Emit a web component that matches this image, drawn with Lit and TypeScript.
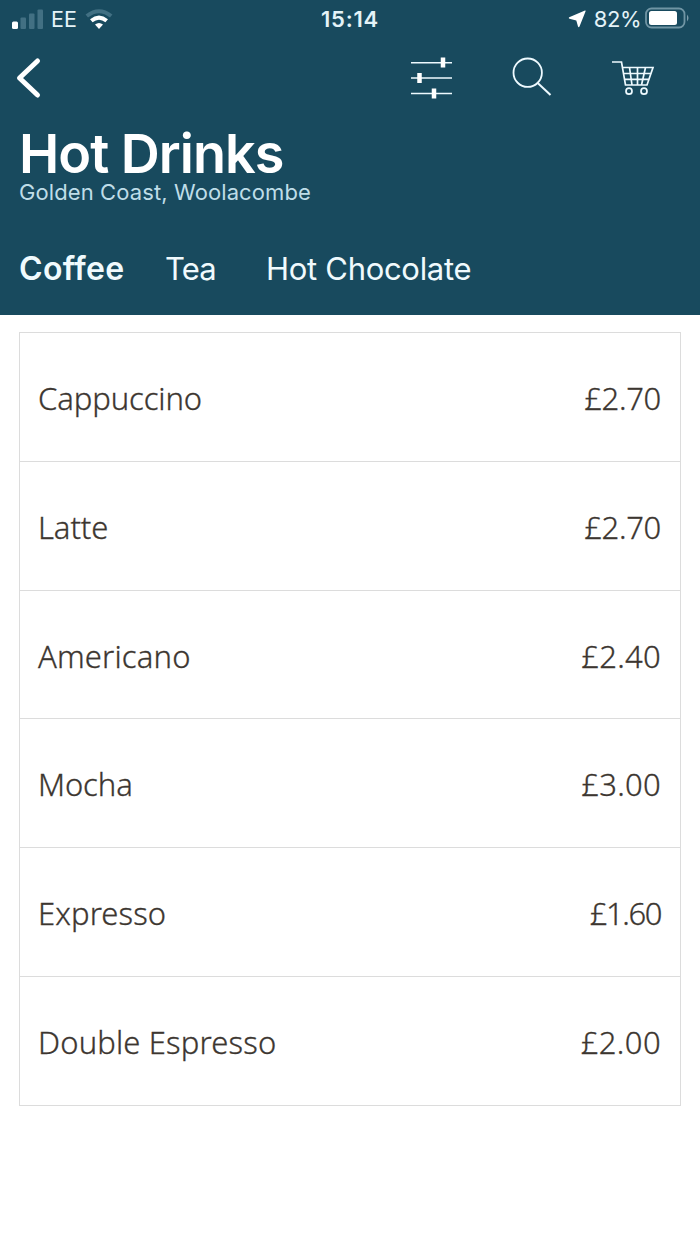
import { LitElement, html, css } from "lit";
import { customElement } from "lit/decorators.js";

interface Drink { name: string; price: string; fit: string; priceFit: string }

const DRINKS: Drink[] = [
  { name: "Cappuccino", price: "£2.70", fit: "-0.1px", priceFit: "-0.3px" },
  { name: "Latte", price: "£2.70", fit: "-0.1px", priceFit: "-0.3px" },
  { name: "Americano", price: "£2.40", fit: "0.15px", priceFit: "0.3px" },
  { name: "Mocha", price: "£3.00", fit: "-0.1px", priceFit: "0.3px" },
  { name: "Expresso", price: "£1.60", fit: "0.1px", priceFit: "-1.4px" },
  { name: "Double Espresso", price: "£2.00", fit: "0.15px", priceFit: "0.4px" },
];

@customElement("app-root")
export class AppRoot extends LitElement {
  static styles = css`
    :host { display: block; min-height: 1244px; background: #fff; font-family: Inter, sans-serif; }
    svg { display: block; }
    header { box-sizing: border-box; height: 315px; background: #184a5e; color: #fff; display: flex; flex-direction: column; }
    .status { height: 38px; display: grid; grid-template-columns: 1fr auto 1fr; align-items: center; color: #e4f3f8; font-size: 22px; line-height: 38px; }
    .left { display: flex; align-items: center; padding-left: 11px; }
    .carrier { margin: 0 8px 0 7px; font-size: 21.5px; }
    .time { font-weight: 600; font-size: 22px; letter-spacing: 0.8px; }
    .right { display: flex; align-items: center; justify-content: flex-end; padding-right: 10px; }
    .pct { margin: 0 4px 0 8px; letter-spacing: -0.5px; }
    .nav { height: 82px; display: flex; }
    h1 { margin: 7px 0 0 19px; font-size: 54px; line-height: 54px; font-weight: 600; letter-spacing: -1px; }
    .place { margin: 0 0 0 19px; font-size: 22px; line-height: 22px; color: #bfdde8; letter-spacing: 0.1px; }
    .tabs { display: flex; margin: 47px 0 0 19px; font-size: 31px; line-height: 38px; color: #f0fafd; }
    .tab { white-space: nowrap; letter-spacing: -0.3px; }
    .tab.coffee { font-weight: 600; width: 146px; font-size: 32px; letter-spacing: 0.3px; }
    .tab.tea { width: 101px; letter-spacing: -0.8px; }
    .list { box-sizing: border-box; margin: 17px 19px 0; height: 774px; border: 1px solid #dcdcdc; display: flex; flex-direction: column; font-family: "Noto Sans", sans-serif; font-weight: 300; font-size: 31px; color: #3c3630; -webkit-text-stroke: 0.3px #3c3630; }
    .row { flex: 1 1 0; display: flex; justify-content: space-between; align-items: center; padding: 2px 19px 0 18px; border-bottom: 1px solid #dcdcdc; }
    .row:last-child { border-bottom: 0; }
  `;

  render() {
    return html`
      <header>
        <div class="status">
          <div class="left">
            <svg width="33" height="24" viewBox="0 0 33 24" fill="#427083">
              <rect x="1" y="14.5" width="6" height="7.5" rx="1.5" fill="#fff"></rect>
              <rect x="9.5" y="10.5" width="5.5" height="11.5" rx="1"></rect>
              <rect x="18" y="6.5" width="5.5" height="15.5" rx="1"></rect>
              <rect x="26.5" y="2.5" width="5.5" height="19.5" rx="1"></rect>
            </svg>
            <span class="carrier">EE</span>
            <svg width="28" height="24" viewBox="0 0 28 24" fill="none">
              <path d="M1.8 9Q14-.5 26.2 9" stroke="#427083" stroke-width="4"></path>
              <path d="M6.3 13.8Q14 7.5 21.7 13.8" stroke="#fff" stroke-width="4"></path>
              <path d="M10 17.5Q14 14.5 18 17.5L14 22Z" fill="#fff"></path>
            </svg>
          </div>
          <span class="time">15:14</span>
          <div class="right">
            <svg width="18" height="18" viewBox="0 0 18 18" fill="#fff"><path d="M17 .5Q18 .3 17.5 1.5L11.5 16.5Q10.7 18 10 16.5L8.3 10.4L1.5 8.8Q0 8 1.2 7.3Z"></path></svg>
            <span class="pct">82%</span>
            <svg width="45" height="24" viewBox="0 0 45 24" fill="none">
              <rect x="1" y="1.5" width="38.5" height="19" rx="5.5" stroke="#7095a4" stroke-width="1.8"></rect>
              <rect x="4" y="4" width="28" height="14" rx="2.5" fill="#fff"></rect>
              <path d="M42 7.5Q45 11 42 14.5Z" fill="#7d9dab"></path>
            </svg>
          </div>
        </div>
        <svg class="nav" width="700" height="82" viewBox="0 38 700 82" fill="none" stroke="#eefaff">
          <path d="M37.5 61L19.5 78L37.5 95" stroke="#fff" stroke-width="5" stroke-linecap="round" stroke-linejoin="round"></path>
          <path d="M411 62.8H452M411 78H452M411 93.5H452" stroke-width="1.6"></path>
          <path d="M443 57.5V67.5M419.5 73V83M434 88.5V98.5" stroke="#fff" stroke-width="4.5"></path>
          <circle cx="527.7" cy="72.7" r="14.2" stroke-width="1.8"></circle>
          <path d="M538 83.3L550.5 95" stroke-width="2"></path>
          <g stroke-width="1.7">
            <path d="M612 62H621.5L625.5 85H647L653 67.5H622.5M624 73.5H651M624.5 79.3H649M629.5 67.5L632 85M637.5 67.5V85M645.5 67.5L641.5 85"></path>
            <circle cx="629" cy="91.2" r="3"></circle><circle cx="644" cy="91.2" r="3"></circle>
          </g>
        </svg>
        <h1>Hot Drinks</h1>
        <div class="place">Golden Coast, Woolacombe</div>
        <nav class="tabs">
          <span class="tab coffee">Coffee</span><span class="tab tea">Tea</span><span class="tab">Hot Chocolate</span>
        </nav>
      </header>
      <main class="list">
        ${DRINKS.map((d) => html`<div class="row"><span style="letter-spacing:${d.fit}">${d.name}</span><span style="letter-spacing:${d.priceFit}">${d.price}</span></div>`)}
      </main>
    `;
  }
}
